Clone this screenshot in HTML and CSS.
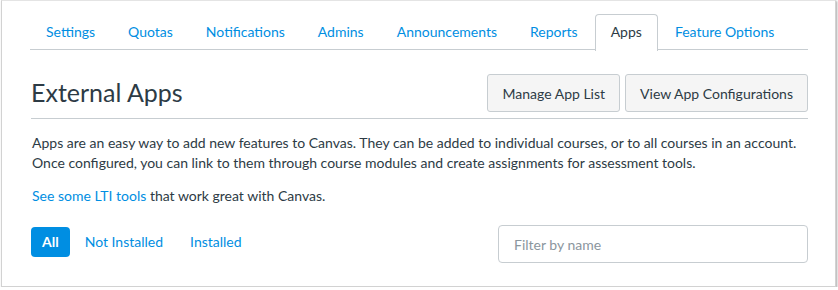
FILE: index.html
```html
<!DOCTYPE html>
<html>
<head>
<meta charset="utf-8">
<link rel="stylesheet" href="styles.css">
</head>
<body>
<div class="frame">
  <nav class="tabs">
    <a class="tab">Settings</a>
    <a class="tab">Quotas</a>
    <a class="tab">Notifications</a>
    <a class="tab">Admins</a>
    <a class="tab">Announcements</a>
    <a class="tab">Reports</a>
    <a class="tab active">Apps</a>
    <a class="tab">Feature Options</a>
  </nav>
  <div class="header">
    <h2 class="title">External Apps</h2>
    <div class="actions">
      <button class="btn">Manage App List</button>
      <button class="btn">View App Configurations</button>
    </div>
  </div>
  <p class="desc">Apps are an easy way to add new features to Canvas. They can be added to individual courses, or to all courses in an account. Once configured, you can link to them through course modules and create assignments for assessment tools.</p>
  <p class="lti"><a class="link">See some LTI tools</a> that work great with Canvas.</p>
  <div class="filters">
    <div class="pills">
      <a class="pill selected">All</a>
      <a class="pill">Not Installed</a>
      <a class="pill">Installed</a>
    </div>
    <input class="search" type="text" placeholder="Filter by name">
  </div>
</div>
</body>
</html>
```

FILE: styles.css
```css
* { box-sizing: border-box; }
html, body { margin: 0; padding: 0; background: #fff; }
body {
  font-family: Lato, "Noto Sans", sans-serif;
  color: #2D3B45;
  font-size: 14px;
}
.frame {
  margin-left: 1px;
  width: 835px;
  height: 287px;
  border: 1px solid #d2d2d2;
  border-top-color: #e4e4e4;
  box-shadow: 1px 1px 2px rgba(0,0,0,0.35);
  padding: 13px 27px 0 29px;
}
.tabs {
  display: flex;
  border-bottom: 1px solid #C7CDD1;
  height: 36px;
  padding-left: 0;
  margin-left: -1px;
}
.tab {
  display: flex;
  align-items: center;
  padding: 0 15px 3px;
  height: 36px;
  color: #008EE2;
  border: 1px solid transparent;
  border-bottom: none;
  border-radius: 4px 4px 0 0;
  margin-right: 1px;
}
.tab.active {
  color: #2D3B45;
  background: #fff;
  border-color: #C7CDD1;
  margin-bottom: -1px;
  height: 37px;
}
.header {
  display: flex;
  align-items: center;
  justify-content: space-between;
  margin-top: 24px;
  padding-bottom: 6px;
  border-bottom: 1px solid #C7CDD1;
}
.title {
  margin: 0 0 3px;
  font-size: 25px;
  font-weight: 400;
  padding-left: 0;
}
.actions { display: flex; gap: 5px; }
.btn {
  font-family: inherit;
  font-size: 14px;
  color: #2D3B45;
  background: #F5F5F5;
  border: 1px solid #C7CDD1;
  border-radius: 3px;
  height: 38px;
  padding: 0 14px;
}
.desc {
  margin: 14px 0 0;
  line-height: 20px;
  padding-left: 1px;
}
.lti {
  margin: 13px 0 0;
  line-height: 20px;
  padding-left: 1px;
}
.link { color: #008EE2; }
.filters {
  display: flex;
  justify-content: space-between;
  align-items: center;
  margin-top: 19px;
}
.pills { display: flex; gap: 3px; margin-top: -5px; }
.pill {
  display: flex;
  align-items: center;
  height: 30px;
  padding: 0 12px;
  color: #008EE2;
  border-radius: 4px;
}
.pill.selected {
  background: #008EE2;
  color: #fff;
  font-weight: 700;
  padding: 0 11px;
}
.search {
  width: 310px;
  height: 38px;
  border: 1px solid #C7CDD1;
  border-radius: 4px;
  padding: 0 15px;
  font-family: inherit;
  font-size: 14px;
  color: #2D3B45;
}
.search::placeholder { color: #8B969E; }
```
